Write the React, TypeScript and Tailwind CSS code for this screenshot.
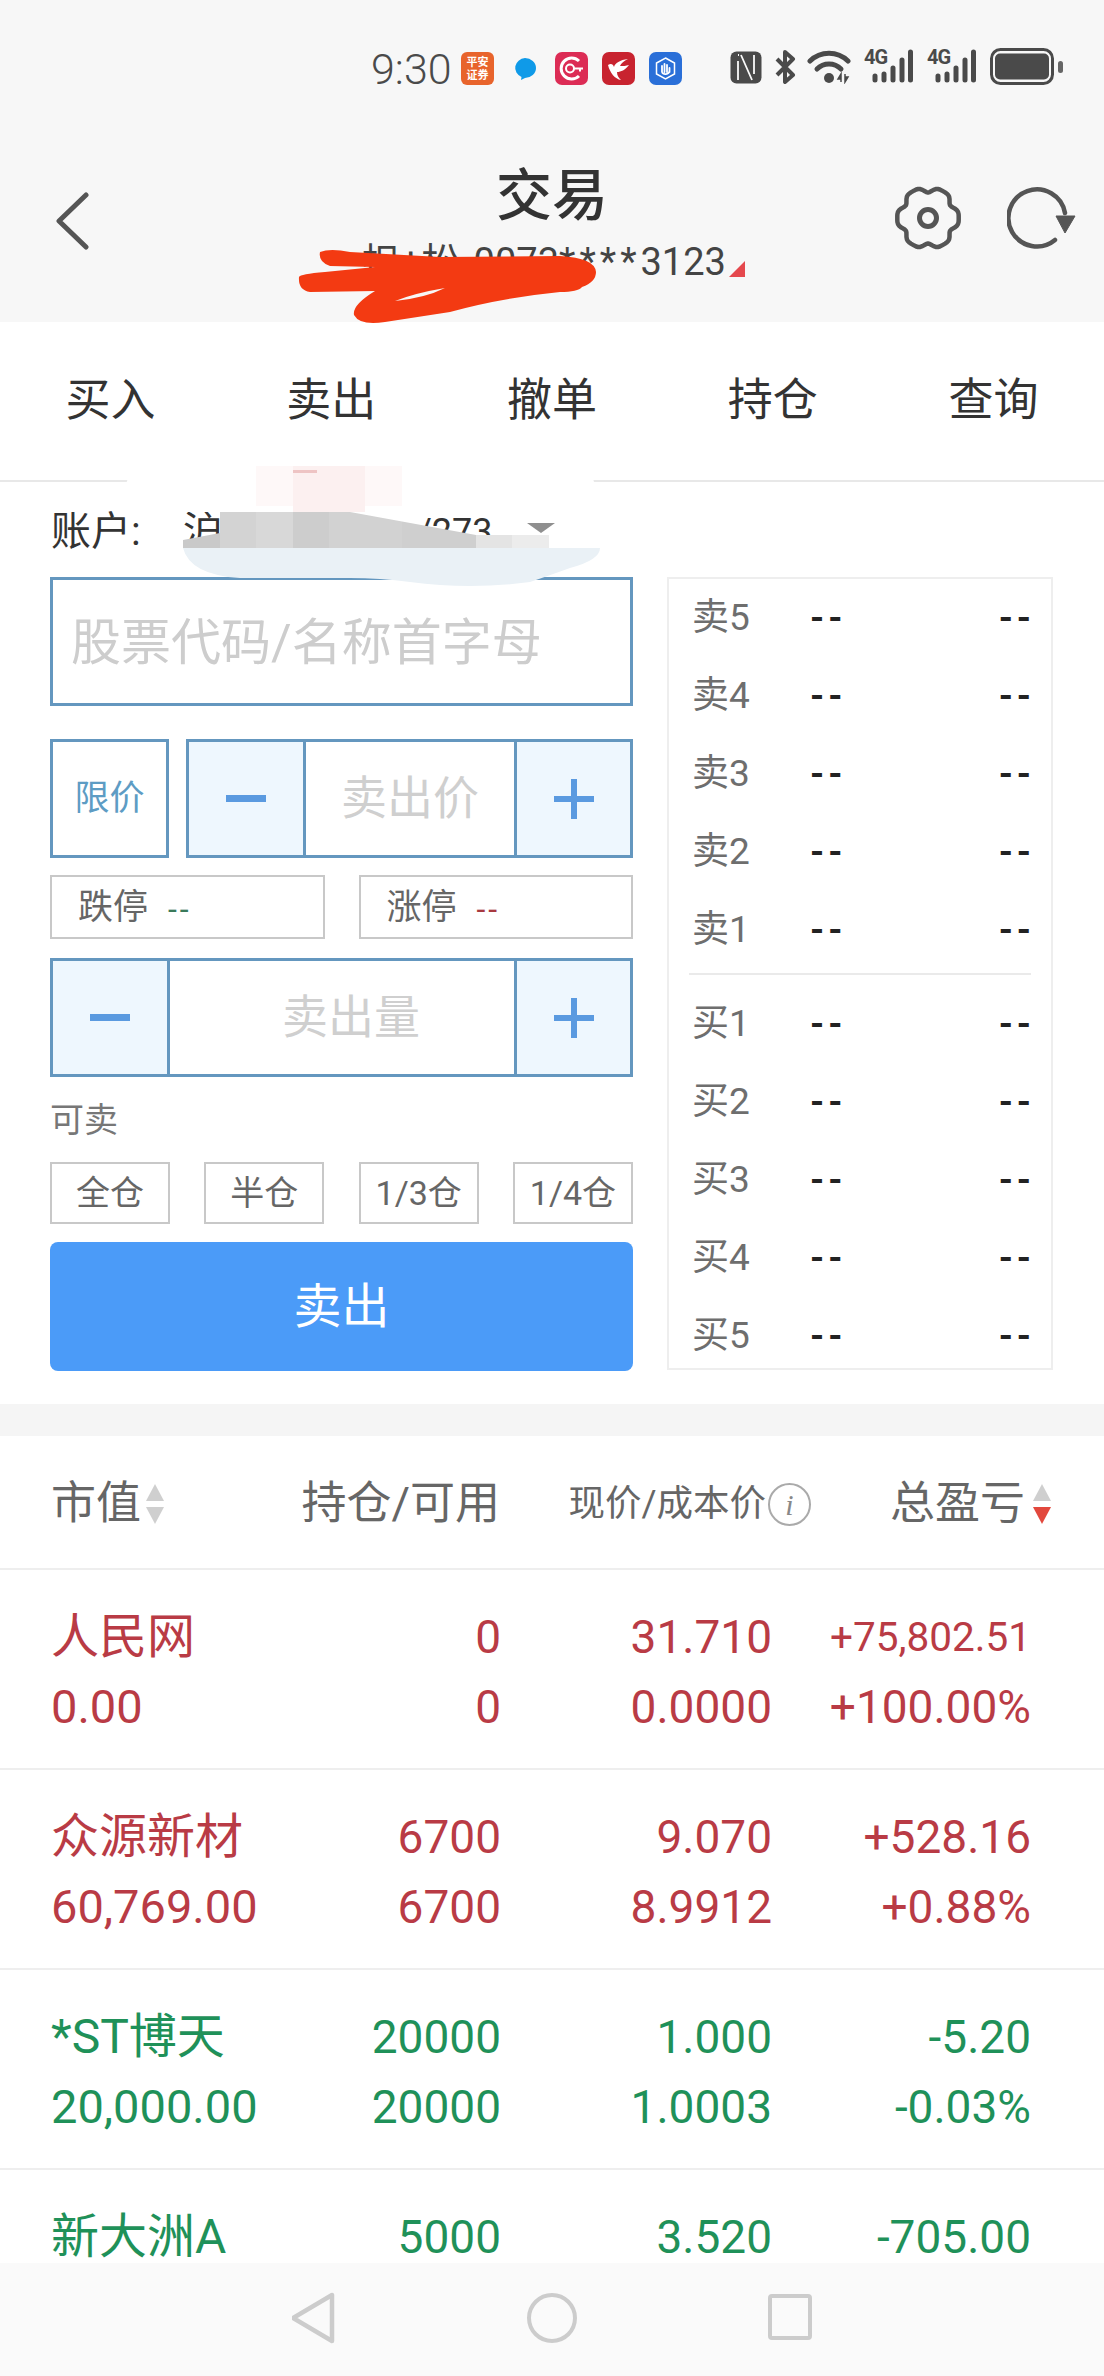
const RED = "text-[#b93b45]";
const GREEN = "text-[#1f9159]";

// six wide teeth with narrow notches for the settings gear
const gearPath =
  Array.from({ length: 96 }, (_, i) => {
    const a = (i / 96) * Math.PI * 2;
    const r = 29 + 2.6 * Math.cos(6 * a) - 0.9 * Math.cos(12 * a);
    return `${i === 0 ? "M" : "L"}${(33 + r * Math.cos(a)).toFixed(2)} ${(33 + r * Math.sin(a)).toFixed(2)}`;
  }).join("") + "Z";

function Signal() {
  return (
    <div className="relative w-[50px] h-[34px]">
      <span className="absolute left-0 top-[-2px] text-[20px] leading-[20px] font-bold tracking-[-1px] text-[#4a4a4a]">4G</span>
      <svg width="50" height="34" viewBox="0 0 50 34" className="absolute left-0 top-0">
        <g stroke="#4a4a4a" strokeWidth="5" strokeLinecap="round">
          <path d="M11 27v4M20 25v6M29 19v12M38 11v20M46.500 3v28" />
        </g>
      </svg>
    </div>
  );
}

function StatusBar() {
  return (
    <div className="h-[140px] pt-[49px] pl-[371px] flex items-start">
      <span className="w-[90px] text-[43px] leading-[40px] font-light text-[#4a4a4a]">9:30</span>
      <div className="w-[33px] h-[33px] mt-[3px] rounded-[6px] bg-[#e8642c] text-white text-[11px] leading-[13px] font-bold flex flex-col items-center justify-center">
        <span>平安</span>
        <span>证券</span>
      </div>
      <svg width="26" height="24" viewBox="0 0 26 24" className="ml-[18px] mt-[8px]">
        <path d="M13 1a11 10 0 0 1 0 20l-4 2 .5-3A11 10 0 0 1 13 1z" fill="#0f9ae8" />
      </svg>
      <svg width="33" height="33" viewBox="0 0 33 33" className="ml-[17px] mt-[3px]">
        <rect width="33" height="33" rx="7" fill="#dc2c55" />
        <path d="M24 9a10.5 10.5 0 1 0 0 15" fill="none" stroke="#fff" strokeWidth="3" />
        <circle cx="15" cy="16.500" r="4" fill="none" stroke="#fff" strokeWidth="2" />
        <path d="M19 16.500h9M25 16.500v3" stroke="#fff" strokeWidth="2" />
      </svg>
      <svg width="33" height="33" viewBox="0 0 33 33" className="ml-[14px] mt-[3px]">
        <rect width="33" height="33" rx="7" fill="#c8232f" />
        <path d="M6 13c3-2 5-1 6 2 1-4 6-7 14-8-4 2-7 4-8 7 3 0 6 0 9-1-4 5-8 7-12 7 0 4 2 6 4 8-6-1-11-7-13-15z" fill="#fff" />
      </svg>
      <svg width="33" height="33" viewBox="0 0 33 33" className="ml-[14px] mt-[3px]">
        <rect width="33" height="33" rx="7" fill="#2a6fd8" />
        <path d="M16.500 6l9 5v11l-9 5-9-5V11z" fill="none" stroke="#fff" strokeWidth="1.500" />
        <path d="M13 20v-6M15.500 20v-8M18 20v-7M20.500 20v-4M13 20c1 3 7 3 7.500-1" stroke="#fff" strokeWidth="1.800" strokeLinecap="round" fill="none" />
      </svg>
      <svg width="32" height="33" viewBox="0 0 32 33" className="ml-[48px] mt-[2px]">
        <rect x="0.500" y="0.500" width="31" height="32" rx="6" fill="#4a4a4a" />
        <path d="M8 10v19M24 4v19M11 4l11 25M8 4l1 0" stroke="#fafafa" strokeWidth="1.800" fill="none" />
      </svg>
      <svg width="22" height="34" viewBox="0 0 22 34" className="ml-[12px] mt-[1px]">
        <path d="M3 9l16 16-8 7V2l8 7L3 25" fill="none" stroke="#4a4a4a" strokeWidth="4" strokeLinejoin="round" />
      </svg>
      <svg width="46" height="34" viewBox="0 0 46 34" className="ml-[11px] mt-[1px]">
        <g fill="none" stroke="#4a4a4a" strokeWidth="5" strokeLinecap="round">
          <path d="M3 11a27 27 0 0 1 38 0" />
          <path d="M10 19a17 17 0 0 1 24 0" />
        </g>
        <circle cx="22" cy="28" r="5" fill="#4a4a4a" />
        <path d="M34 32v-8l-3 5h3M38 24v8l3-5h-3" fill="#4a4a4a" stroke="#4a4a4a" strokeWidth="1.500" />
      </svg>
      <div className="ml-[11px]">
        <Signal />
      </div>
      <div className="ml-[13px]">
        <Signal />
      </div>
      <svg width="74" height="37" viewBox="0 0 74 37" className="ml-[13px] mt-[-1px]">
        <rect x="1.500" y="1.500" width="61" height="34" rx="9" fill="none" stroke="#4a4a4a" strokeWidth="3" />
        <rect x="5" y="5.500" width="54" height="26" rx="5" fill="#4a4a4a" />
        <rect x="68" y="13" width="5" height="12" rx="2.500" fill="#666" />
      </svg>
    </div>
  );
}

function Header() {
  return (
    <header className="h-[322px] bg-[#f7f7f7]">
      <StatusBar />
      <div className="grid grid-cols-[220px_1fr_220px]">
        <div className="pl-[54px] pt-[52px]">
          <svg width="36" height="58" viewBox="0 0 36 58">
            <path d="M32 3L5 29l27 26" fill="none" stroke="#555" strokeWidth="5" strokeLinecap="round" strokeLinejoin="round" />
          </svg>
        </div>
        <div className="flex flex-col items-center">
          <h1 className="mt-[20px] text-[56px] leading-[72px] font-medium text-[#333]">交易</h1>
          <div className="mt-[10px] ml-[3px] flex items-end text-[38px] leading-[40px] text-[#444]">
            <span className="mr-[14px]">担+松</span>
            <span>0073</span>
            <span className="tracking-[4px]">****</span>
            <span>3123</span>
            <span className="ml-[3px] mb-[5px] w-0 h-0 border-l-[16px] border-l-transparent border-b-[16px] border-b-[#e5484d]" />
          </div>
        </div>
        <div className="flex justify-end items-start gap-[46px] pr-[27px] pt-[45px]">
          <svg width="66" height="66" viewBox="0 0 66 66">
            <path d={gearPath} fill="none" stroke="#555" strokeWidth="4.500" strokeLinejoin="round" />
            <circle cx="33" cy="33" r="8.500" fill="none" stroke="#555" strokeWidth="5" />
          </svg>
          <svg width="70" height="66" viewBox="0 0 70 66">
            <path d="M58 28A28.500 28.500 0 1 0 48 55" fill="none" stroke="#555" strokeWidth="4.500" strokeLinecap="round" />
            <path d="M49 31H68L58 48Z" fill="#555" stroke="#555" strokeWidth="1" strokeLinejoin="round" />
          </svg>
        </div>
      </div>
    </header>
  );
}

function Tabs() {
  return (
    <nav className="h-[160px] grid grid-cols-5 border-b-2 border-[#e8e8e8] text-[45px] text-[#333]">
      {["买入", "卖出", "撤单", "持仓", "查询"].map((t) => (
        <div key={t} className="flex items-center justify-center">{t}</div>
      ))}
    </nav>
  );
}

function Minus() {
  return <span className="block w-[40px] h-[7px] bg-[#5a9ae0]" />;
}

function Plus() {
  return (
    <svg width="40" height="40" viewBox="0 0 40 40">
      <path d="M0 20h40M20 0v40" stroke="#5a9ae0" strokeWidth="6" />
    </svg>
  );
}

function Stepper({ label, className, labelClass }: { label: string; className: string; labelClass: string }) {
  return (
    <div className={`flex h-[119px] border-[3px] border-[#6497bf] ${className}`}>
      <div className="w-[114px] flex items-center justify-center bg-[#eef7fe]">
        <Minus />
      </div>
      <div className={`flex-1 flex items-center justify-center border-x-[3px] border-[#6497bf] text-[46px] text-[#cfcfcf] ${labelClass}`}>{label}</div>
      <div className="w-[113px] flex items-center justify-center bg-[#eef7fe]">
        <Plus />
      </div>
    </div>
  );
}

function TradeForm() {
  return (
    <div className="w-[583px] flex flex-col">
      <div className="h-[129px] border-[3px] border-[#6497bf] pl-[18px] pt-[3px] flex items-center text-[50px] text-[#cdcdcd]">股票代码/名称首字母</div>
      <div className="mt-[33px] flex gap-[17px]">
        <div className="w-[119px] h-[119px] border-[3px] border-[#6497bf] flex items-center justify-center pt-[2px] text-[35px] text-[#5d9cc4]">限价</div>
        <Stepper label="卖出价" className="flex-1" labelClass="" />
      </div>
      <div className="mt-[17px] flex gap-[34px]">
        <div className="flex-1 h-[64px] border-2 border-[#c8c8c8] pl-[26px] pt-[3px] flex items-center text-[35px] text-[#666]">
          跌停<span className="ml-[20px] text-[32px] tracking-[3px] text-[#3a7a5a]">--</span>
        </div>
        <div className="flex-1 h-[64px] border-2 border-[#c8c8c8] pl-[26px] pt-[3px] flex items-center text-[35px] text-[#666]">
          涨停<span className="ml-[20px] text-[32px] tracking-[3px] text-[#a83a40]">--</span>
        </div>
      </div>
      <Stepper label="卖出量" className="mt-[19px]" labelClass="pl-[18px]" />
      <div className="mt-[18px] h-[50px] flex items-center text-[34px] text-[#777]">可卖</div>
      <div className="mt-[17px] flex justify-between">
        {["全仓", "半仓", "1/3仓", "1/4仓"].map((t) => (
          <div key={t} className="w-[120px] h-[62px] border-2 border-[#c8c8c8] flex items-center justify-center text-[34px] text-[#666]">{t}</div>
        ))}
      </div>
      <button className="mt-[18px] h-[129px] rounded-[8px] bg-[#4b9bf8] text-white text-[48px]">卖出</button>
    </div>
  );
}

function BookRow({ label }: { label: string }) {
  return (
    <div className="h-[60px] flex items-center pt-[2px] text-[37px] text-[#6e6e6e]">
      <span className="w-[118px]">{label}</span>
      <span className="flex-1 font-bold text-[#222] text-[36px] tracking-[4px]">--</span>
      <span className="font-bold text-[#222] text-[36px] tracking-[4px] -mr-[7px]">--</span>
    </div>
  );
}

function OrderBook() {
  return (
    <div className="w-[386px] h-[793px] border-2 border-[#eeeeee] pt-[8px] px-[23px]">
      <div className="flex flex-col gap-[18px]">
        {[5, 4, 3, 2, 1].map((n) => (
          <BookRow key={n} label={`卖${n}`} />
        ))}
      </div>
      <div className="mt-[14px] mb-[18px] -mx-[3px] h-[2px] bg-[#eaeaea]" />
      <div className="flex flex-col gap-[18px]">
        {[1, 2, 3, 4, 5].map((n) => (
          <BookRow key={n} label={`买${n}`} />
        ))}
      </div>
    </div>
  );
}

function SortArrows({ active }: { active?: boolean }) {
  return (
    <svg width="20" height="40" viewBox="0 0 20 40" className="shrink-0">
      <path d="M10 0l9 17H1z" fill="#cfcfcf" />
      <path d="M1 23h18l-9 17z" fill={active ? "#e2483d" : "#cfcfcf"} />
    </svg>
  );
}

type Holding = { name: string; hold: string; price: string; pnl: string; value: string; avail: string; cost: string; pct: string; color: string; smallPnl?: boolean };

const holdings: Holding[] = [
  { name: "人民网", hold: "0", price: "31.710", pnl: "+75,802.51", value: "0.00", avail: "0", cost: "0.0000", pct: "+100.00%", color: RED, smallPnl: true },
  { name: "众源新材", hold: "6700", price: "9.070", pnl: "+528.16", value: "60,769.00", avail: "6700", cost: "8.9912", pct: "+0.88%", color: RED },
  { name: "*ST博天", hold: "20000", price: "1.000", pnl: "-5.20", value: "20,000.00", avail: "20000", cost: "1.0003", pct: "-0.03%", color: GREEN },
  { name: "新大洲A", hold: "5000", price: "3.520", pnl: "-705.00", value: "", avail: "", cost: "", pct: "", color: GREEN },
];

function HoldingRow({ h }: { h: Holding }) {
  return (
    <div className={`h-[200px] pt-[32px] pl-[51px] pr-[73px] border-b-2 border-[#eeeeee] grid grid-cols-[250px_200px_271px_259px] auto-rows-[70px] items-center text-[46px] leading-[50px] ${h.color}`}>
      <div className="text-[48px]">{h.name}</div>
      <div className="text-right">{h.hold}</div>
      <div className="text-right">{h.price}</div>
      <div className={h.smallPnl ? "text-right text-[40.500px]" : "text-right"}>{h.pnl}</div>
      <div className="text-[47px]">{h.value}</div>
      <div className="text-right">{h.avail}</div>
      <div className="text-right">{h.cost}</div>
      <div className="text-right">{h.pct}</div>
    </div>
  );
}

function HoldingsTable() {
  return (
    <section>
      <div className="h-[134px] pl-[51px] pr-[52px] pt-[4px] border-b-2 border-[#eeeeee] grid grid-cols-[249px_200px_311px_241px] items-center text-[45px] text-[#666]">
        <div className="flex items-center gap-[4px]">市值<SortArrows /></div>
        <div className="text-right">持仓/可用</div>
        <div className="flex items-center justify-end text-[36.500px]">
          现价/成本价
          <span className="ml-[2px] w-[43px] h-[43px] rounded-full border-2 border-[#aaa] flex items-center justify-center font-['Liberation_Serif',serif] italic text-[30px] text-[#888]">i</span>
        </div>
        <div className="flex items-center justify-end gap-[7px]">总盈亏<SortArrows active /></div>
      </div>
      {holdings.map((h) => (
        <HoldingRow key={h.name} h={h} />
      ))}
    </section>
  );
}

function NavBar() {
  return (
    <div className="relative h-[113px] shrink-0 bg-[#fafafa] flex justify-center pt-[29px] gap-[190px]">
      <svg width="44" height="52" viewBox="0 0 44 52">
        <path d="M40 3v46L1 26z" fill="none" stroke="#cccccc" strokeWidth="4.500" strokeLinejoin="round" />
      </svg>
      <svg width="52" height="52" viewBox="0 0 52 52">
        <circle cx="26" cy="26" r="23" fill="none" stroke="#cccccc" strokeWidth="4" />
      </svg>
      <svg width="44" height="52" viewBox="0 0 44 52">
        <rect x="2" y="4" width="40" height="42" rx="2" fill="none" stroke="#cccccc" strokeWidth="4" />
      </svg>
    </div>
  );
}

// scribbled-out account details, drawn in page coordinates
function Redactions() {
  const tiles = [
    [183, 37, "#c9c9c9"],
    [220, 36, "#d3d3d3"],
    [256, 37, "#d8d8d8"],
    [293, 36, "#cdcdcd"],
    [329, 73, "#d2d2d2"],
    [402, 74, "#cfcfcf"],
    [476, 36, "#e4e4e4"],
    [512, 37, "#ececec"],
  ] as const;
  return (
    <svg width="1104" height="2376" viewBox="0 0 1104 2376" className="absolute left-0 top-0 pointer-events-none">
      <defs>
        <clipPath id="mosaic">
          <path d="M183 540L220 533V512H350L476 535H549V548H183Z" />
        </clipPath>
      </defs>
      <path
        d="M320 252Q330 248 350 252L440 257L560 256Q595 258 596 272Q596 282 582 287Q578 292 560 292Q500 298 450 312L385 322Q360 326 354 315Q352 305 375 291L310 292Q298 290 299 277Q300 274 325 272L375 267L330 266Q318 262 320 252Z"
        fill="#f33a12"
      />
      <path d="M395 301Q415 293 445 288Q425 298 395 301Z" fill="#f7f7f7" />
      <path d="M150 466H570Q596 470 595 490Q590 505 540 512H183Q130 505 126 485Q128 470 150 466Z" fill="#ffffff" />
      <rect x="256" y="466" width="146" height="40" fill="#fef8f8" />
      <rect x="293" y="466" width="72" height="46" fill="#fcf0f0" />
      <rect x="293" y="470" width="24" height="3" fill="#eec4c4" />
      <g clipPath="url(#mosaic)">
        {tiles.map(([x, w, fill]) => (
          <rect key={x} x={x} y="510" width={w} height="40" fill={fill} />
        ))}
      </g>
      <path d="M183 548H600Q600 560 570 568Q545 577 530 582Q470 590 410 582Q380 578 350 578H240Q190 575 183 548Z" fill="#eaf1f6" />
    </svg>
  );
}

export default function App() {
  return (
    <div className="relative w-[1104px] h-[2376px] overflow-hidden flex flex-col bg-white font-['Roboto','Noto_Sans_CJK_SC',sans-serif]">
      <div className="flex-1 min-h-0">
        <Header />
        <Tabs />
        <div className="h-[95px] pl-[51px] pt-[5px] flex items-center text-[40px] text-[#333]">
          <span className="w-[132px]">账户:</span>
          <span className="w-[234px]">沪A</span>
          <span className="text-[36px]">/273</span>
          <span className="ml-[34px] mb-[8px] w-0 h-0 border-x-[14px] border-x-transparent border-t-[10px] border-t-[#8f8f8f]" />
        </div>
        <div className="flex gap-[34px] px-[50px] pb-[33px]">
          <TradeForm />
          <OrderBook />
        </div>
        <div className="h-[32px] bg-[#f5f5f5]" />
        <HoldingsTable />
      </div>
      <NavBar />
      <Redactions />
    </div>
  );
}
